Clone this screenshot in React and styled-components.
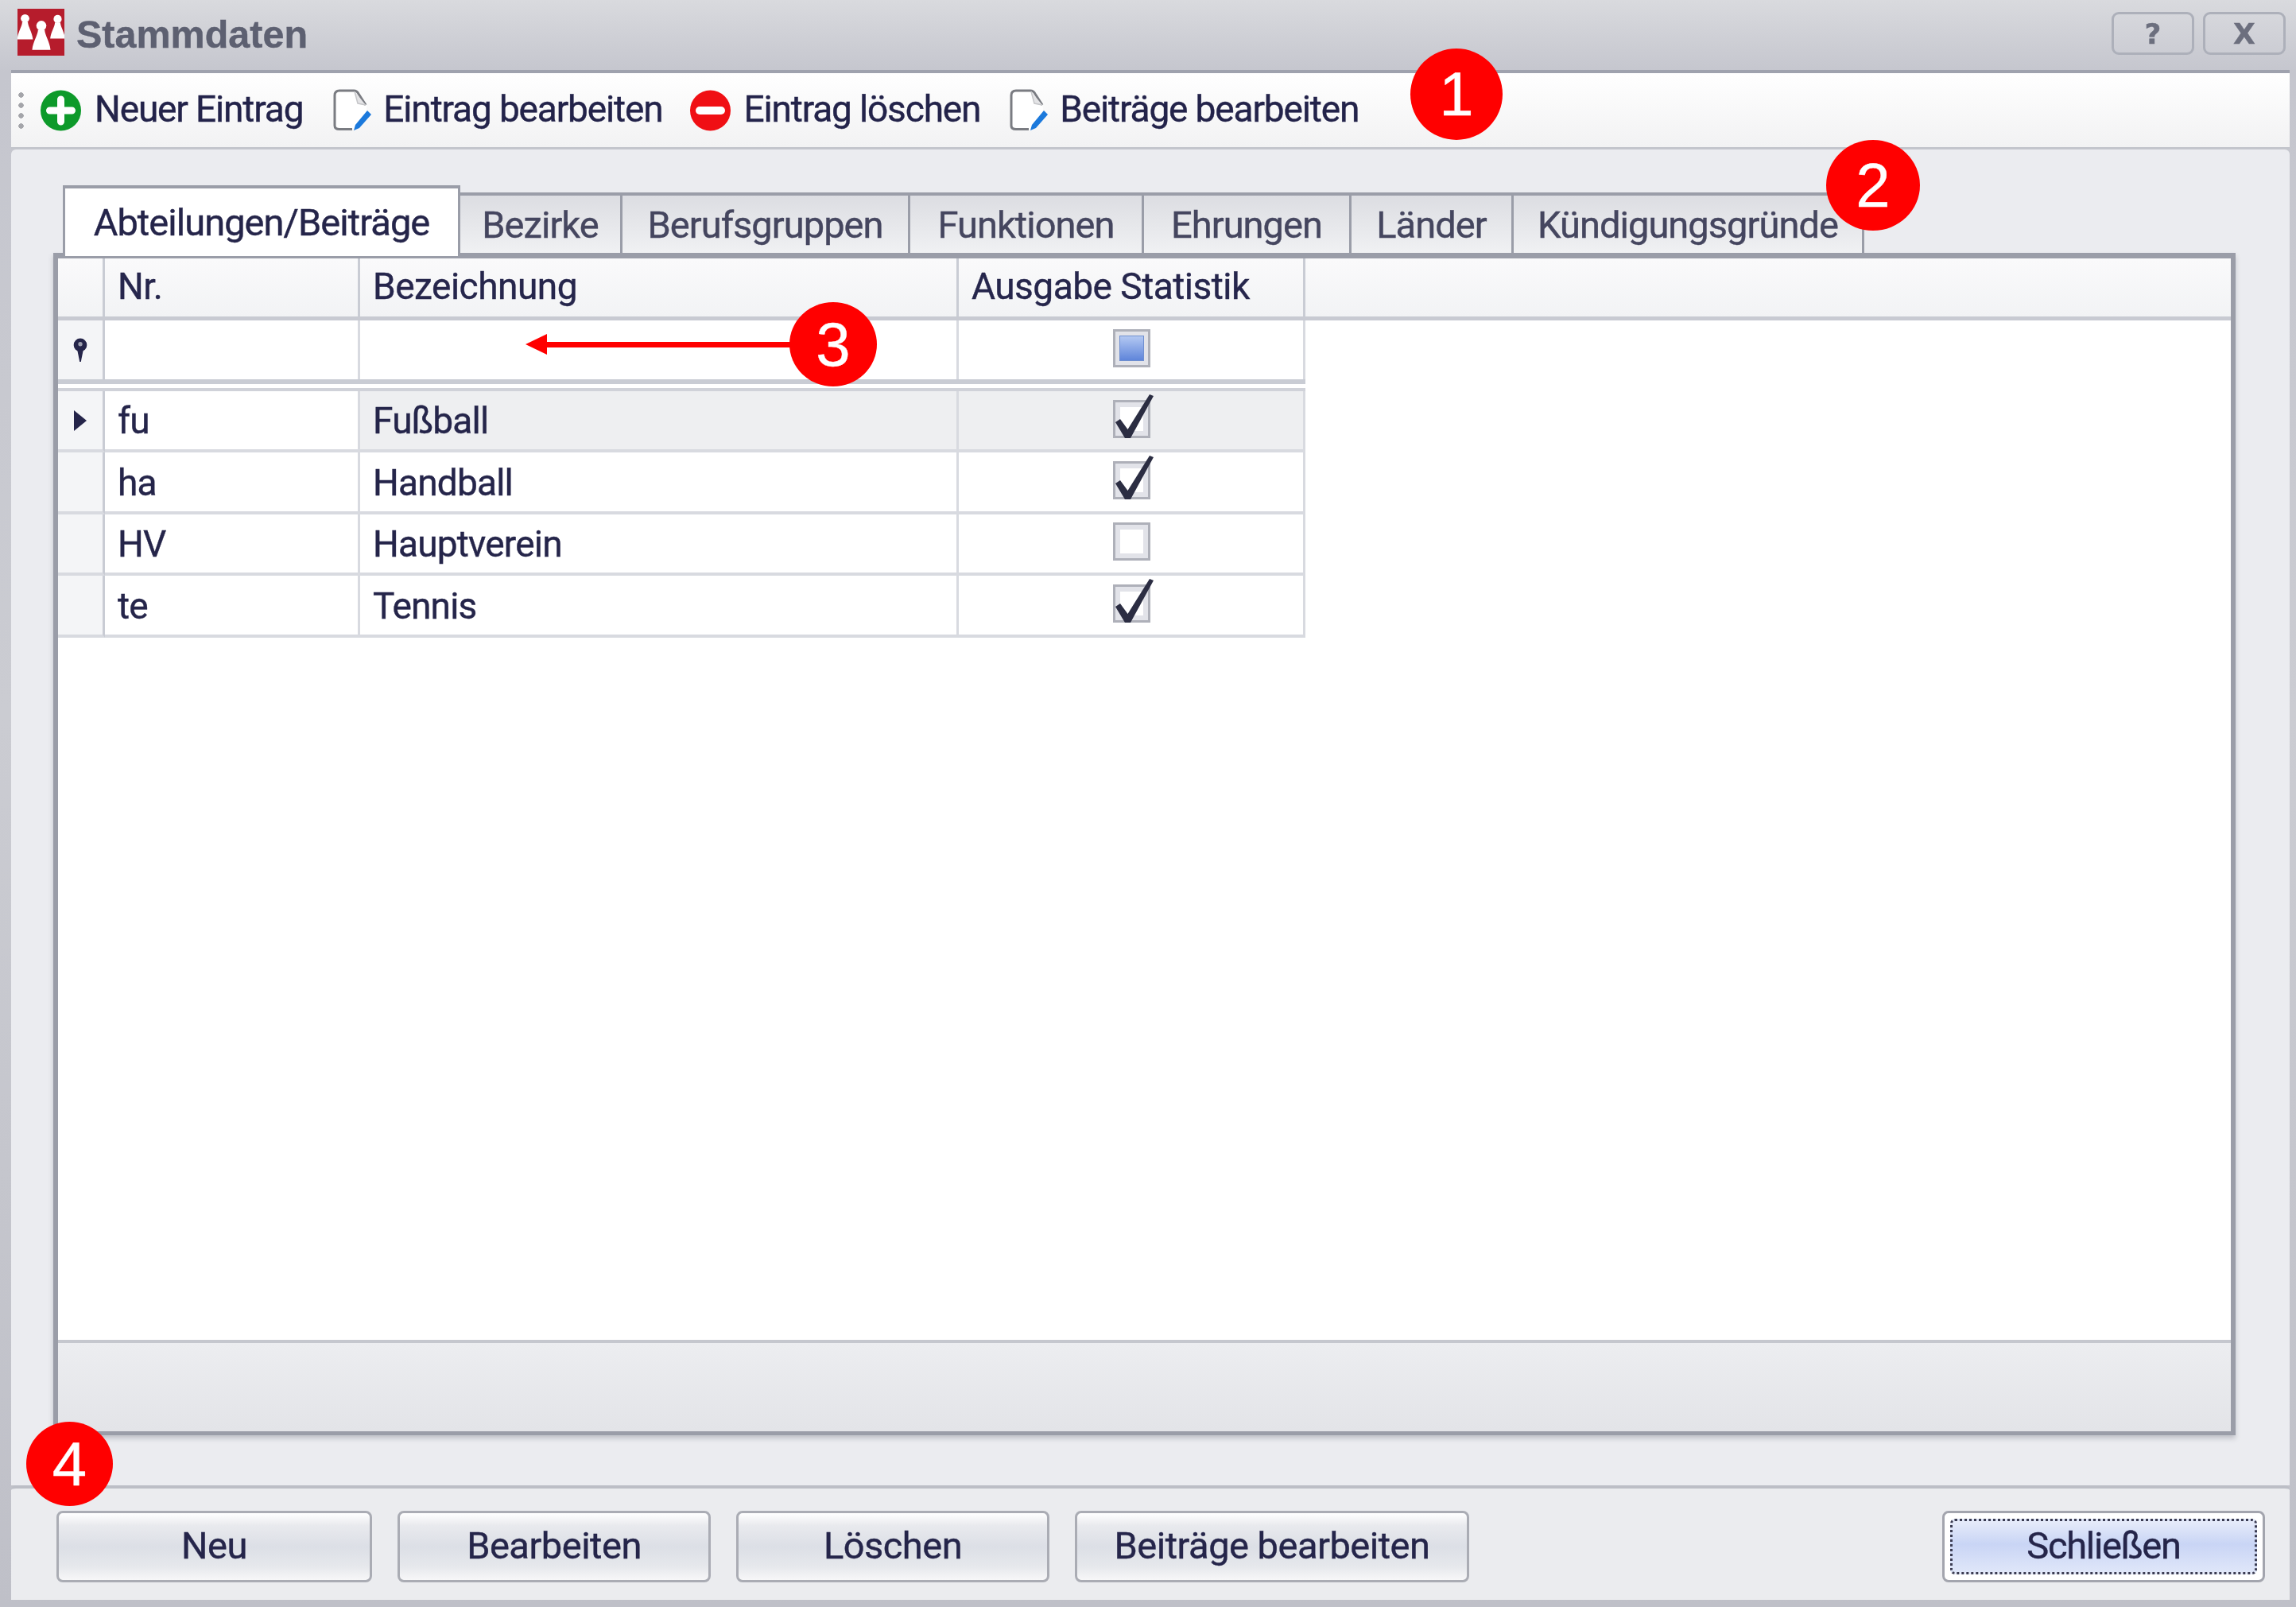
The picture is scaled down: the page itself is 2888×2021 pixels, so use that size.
import React from 'react';
import styled, { createGlobalStyle } from 'styled-components';

const GlobalStyle = createGlobalStyle`
  html, body {
    margin: 0;
    padding: 0;
    background: #c8c9d0;
  }
  * {
    box-sizing: border-box;
  }
`;

const Window = styled.div`
  position: relative;
  width: 2888px;
  height: 2021px;
  overflow: hidden;
  display: flex;
  flex-direction: column;
  padding: 0 8px 9px 14px;
  background: linear-gradient(#d9dade 0, #c5c6ce 90px, #cbccd2 900px, #bfc0c8 2021px);
  font-family: Roboto, "Liberation Sans", sans-serif;
  color: #25254a;
  filter: blur(0.7px);
  -webkit-text-stroke: 0.4px currentColor;
`;

const TitleBar = styled.div`
  height: 88px;
  margin-left: -14px;
  margin-right: -8px;
  padding: 11px 13px 0 22px;
  display: flex;
  align-items: flex-start;
  flex: none;
`;

const AppTitle = styled.div`
  margin: 5px 0 0 15px;
  font-family: "Liberation Sans", sans-serif;
  font-size: 48.5px;
  font-weight: 700;
  line-height: 54px;
  color: #5d6071;
`;

const TitleButtons = styled.div`
  margin-left: auto;
  margin-top: 4px;
  display: flex;
  gap: 11px;
`;

const TitleButton = styled.div`
  width: 104px;
  height: 54px;
  border: 3px solid #adb0ba;
  border-radius: 9px;
  display: flex;
  align-items: center;
  justify-content: center;
  background: linear-gradient(#d6d7dc, #cccdd4);
  font-family: "DejaVu Sans", sans-serif;
  font-size: 36px;
  font-weight: 700;
  color: #6c6f7e;
`;

const Toolbar = styled.div`
  height: 100px;
  flex: none;
  border-top: 4px solid #9fa2ae;
  border-bottom: 3px solid #c3c5cc;
  padding-left: 9px;
  display: flex;
  align-items: center;
  background: linear-gradient(#ffffff, #f2f2f3);
`;

const Grip = styled.div`
  width: 7px;
  height: 52px;
  margin-right: 21px;
  background: radial-gradient(circle, #a4a5aa 3px, transparent 3.5px) 0 0 / 7px 13px;
`;

const ToolItem = styled.div`
  display: flex;
  align-items: center;
  gap: ${(p) => p.$gap}px;
  margin-right: ${(p) => p.$after}px;
  font-size: 46px;
  letter-spacing: -1.15px;
  line-height: 54px;
  color: #23234a;
  white-space: nowrap;
`;

const ToolLabel = styled.span`
  margin-top: -4px;
`;

const MainPanel = styled.div`
  flex: 1;
  min-height: 0;
  display: flex;
  flex-direction: column;
  padding: 45px 68px 63px 53px;
  background: #ebecf0;
  border-radius: 6px 6px 0 0;
`;

const TabStrip = styled.div`
  display: flex;
  align-items: flex-end;
  flex: none;
  height: 89px;
  margin-bottom: -4px;
  padding-left: 12px;
  position: relative;
  z-index: 1;
`;

const Tab = styled.div`
  width: ${(p) => p.$width}px;
  height: ${(p) => (p.$active ? 89 : 76)}px;
  margin-bottom: ${(p) => (p.$active ? 0 : 4)}px;
  border: solid #9a9da8;
  border-width: 4px 3px 0 ${(p) => (p.$active ? 3 : 0)}px;
  display: flex;
  align-items: center;
  justify-content: center;
  background: ${(p) => (p.$active ? '#ffffff' : 'linear-gradient(#dcdde2, #f0f1f3)')};
  color: ${(p) => (p.$active ? '#25254a' : '#45465f')};
  font-size: 47px;
  letter-spacing: -0.95px;
  white-space: nowrap;
`;

const GridFrame = styled.div`
  flex: 1;
  min-height: 0;
  display: flex;
  flex-direction: column;
  border: solid #9a9da8;
  border-width: 7px 6px 5px 6px;
  box-shadow: 0 4px 6px rgba(90, 92, 105, 0.3);
  background: #ffffff;
`;

const columns = '59px 321px 753px 436px';

const HeaderRow = styled.div`
  display: grid;
  grid-template-columns: ${columns} 1fr;
  flex: none;
  height: 78px;
  border-bottom: 5px solid #c8cad2;
  background: linear-gradient(#fafafb, #f2f3f5);
`;

const HeaderCell = styled.div`
  display: flex;
  align-items: center;
  padding: 0 0 3px 16px;
  border-right: 3px solid #c9ccd4;
  font-size: 46px;
  letter-spacing: -0.5px;
  color: #26264c;
  &:last-child {
    border-right: 0;
  }
`;

const Rows = styled.div`
  display: grid;
  grid-template-columns: ${columns};
  width: 1569px;
`;

const FilterRows = styled(Rows)`
  height: 80px;
  border-bottom: 6px solid #c9ccd4;
`;

const DataRows = styled(Rows)`
  border-top: ${(p) => (p.$first ? 4 : 0)}px solid #d0d2d9;
  margin-top: ${(p) => (p.$first ? 5 : 0)}px;
  height: ${(p) => (p.$first ? 81 : 77.5)}px;
`;

const Indicator = styled.div`
  display: flex;
  align-items: center;
  justify-content: center;
  background: #f4f5f7;
  border-right: 3px solid #c9ccd4;
  border-bottom: ${(p) => (p.$plain ? 0 : 4)}px solid #d8dae0;
`;

const Cell = styled.div`
  display: flex;
  align-items: center;
  justify-content: ${(p) => (p.$center ? 'center' : 'flex-start')};
  padding-left: ${(p) => (p.$center ? 2 : 16)}px;
  padding-top: ${(p) => (p.$center || p.$top ? 0 : 2)}px;
  border-right: 3px solid #d8dae0;
  border-bottom: ${(p) => (p.$plain ? 0 : 4)}px solid #d8dae0;
  background: ${(p) => (p.$selected ? '#eeeff1' : '#ffffff')};
  font-size: 46px;
  letter-spacing: -0.8px;
  color: #25254a;
`;

const CheckFrame = styled.div`
  position: relative;
  width: 47px;
  height: 48px;
  margin-bottom: 4px;
  padding: 6px;
  display: flex;
  border: 3px solid #aeb0b9;
  background: #e2e3e9;
`;

const CheckInner = styled.div`
  flex: 1;
  background: ${(p) => (p.$blue ? 'linear-gradient(#b3c8f2, #5f85da)' : '#ffffff')};
  box-shadow: ${(p) => (p.$blue ? '0 0 0 1px #6f8fd0' : 'none')};
`;

const CheckMark = styled.svg`
  position: absolute;
  left: -3px;
  top: -3px;
  width: 54px;
  height: 54px;
  overflow: visible;
`;

const GridSpace = styled.div`
  flex: 1;
  background: #ffffff;
`;

const GridFooter = styled.div`
  height: 115px;
  flex: none;
  border-top: 4px solid #c5c7ce;
  background: linear-gradient(#ecedf0, #e3e4e8);
`;

const Footer = styled.div`
  height: 144px;
  flex: none;
  border-top: 4px solid #bcbec6;
  border-radius: 6px 6px 0 0;
  padding: 28px 31px 0 57px;
  display: flex;
  align-items: flex-start;
  gap: 32px;
  background: #ebecef;
`;

const Button = styled.div`
  width: ${(p) => p.$width}px;
  height: 90px;
  margin-left: ${(p) => (p.$right ? 'auto' : 0)};
  padding-bottom: ${(p) => (p.$focused ? 0 : 3)}px;
  border: 3px solid ${(p) => (p.$focused ? '#a3a5ae' : '#aaacb4')};
  border-radius: 8px;
  display: flex;
  align-items: center;
  justify-content: center;
  background: ${(p) =>
    p.$focused
      ? '#ffffff'
      : 'linear-gradient(#ffffff 0, #e9eaee 18%, #dcdfe6 50%, #e6e8ec 80%, #f7f7f8 100%)'};
  font-size: 47px;
  letter-spacing: -0.5px;
  color: #25254a;
`;

const FocusBox = styled.div`
  width: calc(100% - 14px);
  height: calc(100% - 14px);
  padding-bottom: 3px;
  border: 3px dotted #3b3c52;
  border-radius: 6px;
  display: flex;
  align-items: center;
  justify-content: center;
  background: linear-gradient(#e6ebfa, #c9d5f5 45%, #dfe6f9);
  letter-spacing: -1.3px;
`;

const Badge = styled.div`
  position: absolute;
  left: ${(p) => p.$x}px;
  top: ${(p) => p.$y}px;
  width: ${(p) => p.$w}px;
  height: ${(p) => p.$h}px;
  border-radius: 50%;
  display: flex;
  align-items: center;
  justify-content: center;
  background: #ff0000;
  color: #ffffff;
  font-family: "Liberation Sans", sans-serif;
  font-size: 78px;
  z-index: 5;
`;

const Arrow = styled.div`
  position: absolute;
  left: 688px;
  top: 430px;
  width: 309px;
  height: 7px;
  background: #ff0000;
  z-index: 4;
  &::before {
    content: '';
    position: absolute;
    left: -27px;
    top: -10px;
    border-style: solid;
    border-width: 13.5px 27px 13.5px 0;
    border-color: transparent #ff0000 transparent transparent;
  }
`;

const Pawn = ({ x, y, s }) => (
  <g transform={`translate(${x} ${y}) scale(${s})`}>
    <circle cx="0" cy="-13" r="6" />
    <path d="M-4 -8 L4 -8 C4 -2 10 6 11 16 L-11 16 C-10 6 -4 -2 -4 -8 Z" />
  </g>
);

const Logo = () => (
  <svg width="59" height="59" viewBox="0 0 59 59">
    <rect width="59" height="59" fill="#b61c2c" />
    <g fill="#ffffff">
      <Pawn x={9.5} y={24} s={0.9} />
      <Pawn x={50.5} y={24} s={0.85} />
      <Pawn x={30} y={35} s={1.05} />
    </g>
  </svg>
);

const PlusIcon = () => (
  <svg width="51" height="52" viewBox="0 0 51 52">
    <circle cx="25.5" cy="26" r="25.5" fill="#0d9a2a" />
    <path d="M25.5 12 V40 M11.5 26 H39.5" stroke="#ffffff" strokeWidth="9" strokeLinecap="round" />
  </svg>
);

const MinusIcon = () => (
  <svg width="51" height="52" viewBox="0 0 51 52">
    <circle cx="25.5" cy="26" r="25.5" fill="#f00f14" />
    <path d="M12 26 H39" stroke="#ffffff" strokeWidth="10" strokeLinecap="round" />
  </svg>
);

const DocIcon = () => (
  <svg width="50" height="53" viewBox="0 0 50 53">
    <path d="M8 2 H26 Q30 2 32 6 L41 20 Q42 22 42 24 V36 L29 51 H8 Q2 51 2 46 V8 Q2 2 8 2 Z" fill="#ffffff" />
    <path d="M24 50.5 H8 Q2 50.5 2 46 V8 Q2 2 8 2 H26 Q30 2 32 6 L41 20" fill="none" stroke="#7a7c82" strokeWidth="3" />
    <path d="M27 3 L31 18 L41 20" fill="#e4e4e6" stroke="#c5c6c9" strokeWidth="1.5" />
    <path d="M26 52 L28 45 L43 27 L48 32 L33 49 Z" fill="#1b79dc" />
  </svg>
);

const PinIcon = () => (
  <svg width="24" height="30" viewBox="0 0 21 27">
    <circle cx="10.5" cy="8" r="7.5" fill="#25254a" />
    <circle cx="10.5" cy="7" r="2.4" fill="#9ea0b0" />
    <path d="M7 13 L14 13 L11.2 27 L9.8 27 Z" fill="#25254a" />
  </svg>
);

const RowArrow = () => (
  <svg width="16" height="26" viewBox="0 0 16 26">
    <path d="M0 0 L16 13 L0 26 Z" fill="#25254a" />
  </svg>
);

const Check = () => (
  <CheckMark viewBox="0 0 54 54">
    <path d="M3 28 L9 24 L18.5 37 L46 -7 L51 -5 L22 48 L15 48 Z" fill="#2b2d42" />
  </CheckMark>
);

const tabs = [
  { label: 'Abteilungen/Beiträge', width: 500, active: true },
  { label: 'Bezirke', width: 204 },
  { label: 'Berufsgruppen', width: 362 },
  { label: 'Funktionen', width: 294 },
  { label: 'Ehrungen', width: 261 },
  { label: 'Länder', width: 204 },
  { label: 'Kündigungsgründe', width: 441 },
];

const rows = [
  { nr: 'fu', name: 'Fußball', checked: true },
  { nr: 'ha', name: 'Handball', checked: true },
  { nr: 'HV', name: 'Hauptverein', checked: false },
  { nr: 'te', name: 'Tennis', checked: true },
];

const App = () => {
  return (
    <Window>
      <GlobalStyle />
      <TitleBar>
        <Logo />
        <AppTitle>Stammdaten</AppTitle>
        <TitleButtons>
          <TitleButton>?</TitleButton>
          <TitleButton>X</TitleButton>
        </TitleButtons>
      </TitleBar>

      <Toolbar>
        <Grip />
        <ToolItem $gap={17} $after={38}><PlusIcon /><ToolLabel>Neuer Eintrag</ToolLabel></ToolItem>
        <ToolItem $gap={13} $after={35}><DocIcon /><ToolLabel>Eintrag bearbeiten</ToolLabel></ToolItem>
        <ToolItem $gap={16} $after={37}><MinusIcon /><ToolLabel>Eintrag löschen</ToolLabel></ToolItem>
        <ToolItem $gap={13} $after={0}><DocIcon /><ToolLabel>Beiträge bearbeiten</ToolLabel></ToolItem>
      </Toolbar>

      <MainPanel>
        <TabStrip>
          {tabs.map((tab) => (
            <Tab key={tab.label} $width={tab.width} $active={tab.active}>{tab.label}</Tab>
          ))}
        </TabStrip>
        <GridFrame>
          <HeaderRow>
            <HeaderCell />
            <HeaderCell>Nr.</HeaderCell>
            <HeaderCell>Bezeichnung</HeaderCell>
            <HeaderCell>Ausgabe Statistik</HeaderCell>
            <HeaderCell />
          </HeaderRow>
          <FilterRows>
            <Indicator $plain><PinIcon /></Indicator>
            <Cell $plain />
            <Cell $plain />
            <Cell $plain $center>
              <CheckFrame><CheckInner $blue /></CheckFrame>
            </Cell>
          </FilterRows>
          {rows.map((row, i) => (
            <DataRows key={row.nr} $first={i === 0}>
              <Indicator>{i === 0 && <RowArrow />}</Indicator>
              <Cell $top={i === 0}>{row.nr}</Cell>
              <Cell $top={i === 0} $selected={i === 0}>{row.name}</Cell>
              <Cell $center $selected={i === 0}>
                <CheckFrame>
                  <CheckInner />
                  {row.checked && <Check />}
                </CheckFrame>
              </Cell>
            </DataRows>
          ))}
          <GridSpace />
          <GridFooter />
        </GridFrame>
      </MainPanel>

      <Footer>
        <Button $width={397}>Neu</Button>
        <Button $width={394}>Bearbeiten</Button>
        <Button $width={394}>Löschen</Button>
        <Button $width={496}>Beiträge bearbeiten</Button>
        <Button $width={406} $right $focused>
          <FocusBox>Schließen</FocusBox>
        </Button>
      </Footer>

      <Badge $x={1774} $y={61} $w={116} $h={115}>1</Badge>
      <Badge $x={2297} $y={176} $w={118} $h={114}>2</Badge>
      <Arrow />
      <Badge $x={993} $y={380} $w={110} $h={106}>3</Badge>
      <Badge $x={33} $y={1788} $w={109} $h={106}>4</Badge>
    </Window>
  );
};

export default App;
